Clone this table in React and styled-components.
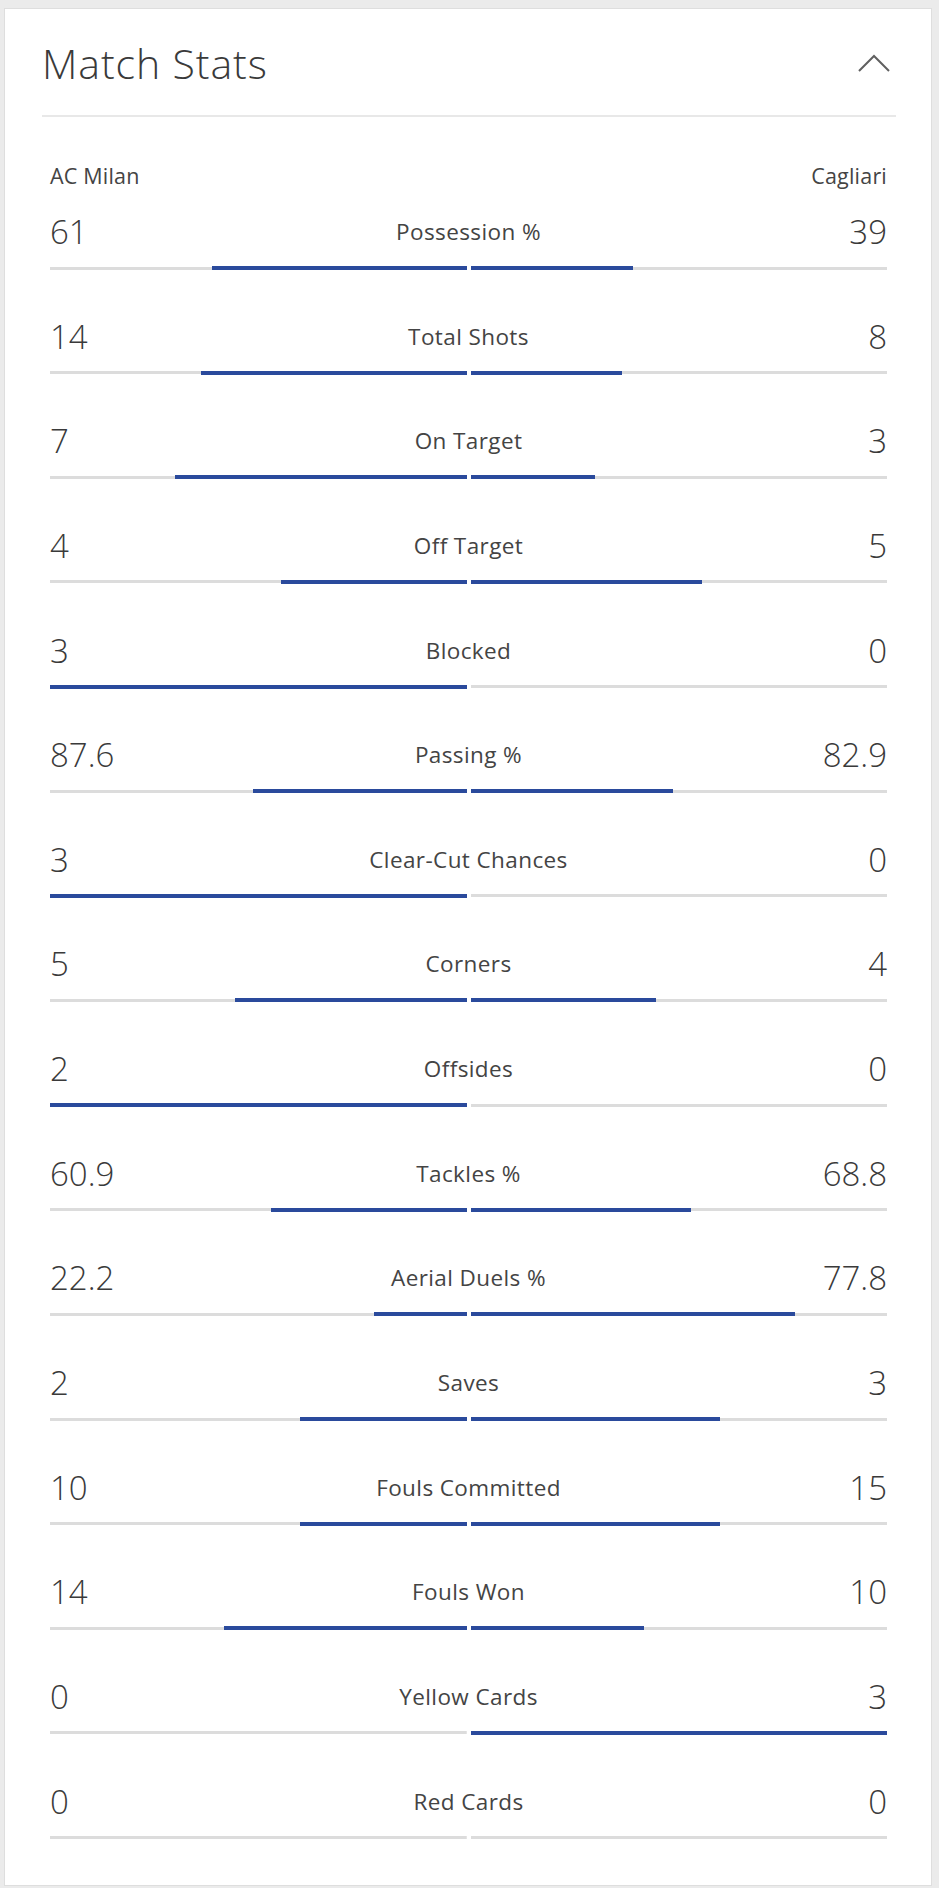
import React from "react";
import styled, { createGlobalStyle } from "styled-components";

const GlobalStyle = createGlobalStyle`
  html, body {
    margin: 0;
    padding: 0;
    background: #ebebeb;
  }
  body {
    font-family: "Open Sans", "Liberation Sans", sans-serif;
    color: #333;
  }
`;

const Page = styled.div`
  padding: 8px 7px 6px 4px;
`;

const Card = styled.section`
  background: #fff;
  border: 1px solid #dedede;
  padding: 29px 35px 2px 37px;
`;

const Header = styled.header`
  display: flex;
  align-items: center;
  justify-content: space-between;
  padding-bottom: 27px;
  border-bottom: 2px solid #e8e8e8;
`;

const Title = styled.h2`
  margin: 0;
  font-size: 41px;
  line-height: 50px;
  font-weight: 300;
  color: #3a3a3a;
  letter-spacing: 0.9px;
`;

const Toggle = styled.button`
  display: flex;
  border: 0;
  background: none;
  padding: 0;
  margin-right: 6px;
  cursor: pointer;
`;

const Stats = styled.div`
  padding: 44px 9px 0 8px;
`;

const Teams = styled.div`
  display: flex;
  justify-content: space-between;
  font-size: 21.5px;
  font-weight: 400;
  letter-spacing: 0.2px;
  line-height: 30px;
  color: #444;
  margin-bottom: 18px;
`;

const Row = styled.div`
  height: 104.65px;
`;

const Line = styled.div`
  display: grid;
  grid-template-columns: 1fr auto 1fr;
  align-items: center;
  height: 40px;
`;

const Value = styled.span`
  font-size: 33px;
  font-weight: 300;
  color: #3a3a3a;
  justify-self: ${({ $side }) => ($side === "right" ? "end" : "start")};
`;

const Label = styled.span`
  font-size: 22.5px;
  font-weight: 400;
  letter-spacing: 0.4px;
  color: #444;
`;

const Bars = styled.div`
  display: grid;
  grid-template-columns: 1fr 1fr;
  gap: 4px;
  margin-top: 17px;
`;

const Track = styled.div`
  display: flex;
  height: 4px;
  justify-content: ${({ $side }) => ($side === "left" ? "flex-end" : "flex-start")};
  background: linear-gradient(#dcdcdc, #dcdcdc) center / 100% 3px no-repeat;
`;

const Fill = styled.div`
  height: 4px;
  background: #2a4a9c;
`;

const stats = [
  ["61", "Possession %", "39"],
  ["14", "Total Shots", "8"],
  ["7", "On Target", "3"],
  ["4", "Off Target", "5"],
  ["3", "Blocked", "0"],
  ["87.6", "Passing %", "82.9"],
  ["3", "Clear-Cut Chances", "0"],
  ["5", "Corners", "4"],
  ["2", "Offsides", "0"],
  ["60.9", "Tackles %", "68.8"],
  ["22.2", "Aerial Duels %", "77.8"],
  ["2", "Saves", "3"],
  ["10", "Fouls Committed", "15"],
  ["14", "Fouls Won", "10"],
  ["0", "Yellow Cards", "3"],
  ["0", "Red Cards", "0"],
];

function StatRow({ home, label, away }) {
  const h = parseFloat(home);
  const a = parseFloat(away);
  const total = h + a;
  const hp = total ? (h / total) * 100 : 0;
  const ap = total ? (a / total) * 100 : 0;

  return (
    <Row>
      <Line>
        <Value>{home}</Value>
        <Label>{label}</Label>
        <Value $side="right">{away}</Value>
      </Line>
      <Bars>
        <Track $side="left">
          <Fill style={{ width: `${hp}%` }} />
        </Track>
        <Track $side="right">
          <Fill style={{ width: `${ap}%` }} />
        </Track>
      </Bars>
    </Row>
  );
}

export default function App() {
  return (
    <Page>
      <GlobalStyle />
      <Card>
        <Header>
          <Title>Match Stats</Title>
          <Toggle aria-label="Collapse">
            <svg width="32" height="18" viewBox="0 0 32 18">
              <polyline points="1,17 16,2 31,17" fill="none" stroke="#606060" strokeWidth="2" />
            </svg>
          </Toggle>
        </Header>
        <Stats>
          <Teams>
            <span>AC Milan</span>
            <span>Cagliari</span>
          </Teams>
          {stats.map(([home, label, away]) => (
            <StatRow key={label} home={home} label={label} away={away} />
          ))}
        </Stats>
      </Card>
    </Page>
  );
}
